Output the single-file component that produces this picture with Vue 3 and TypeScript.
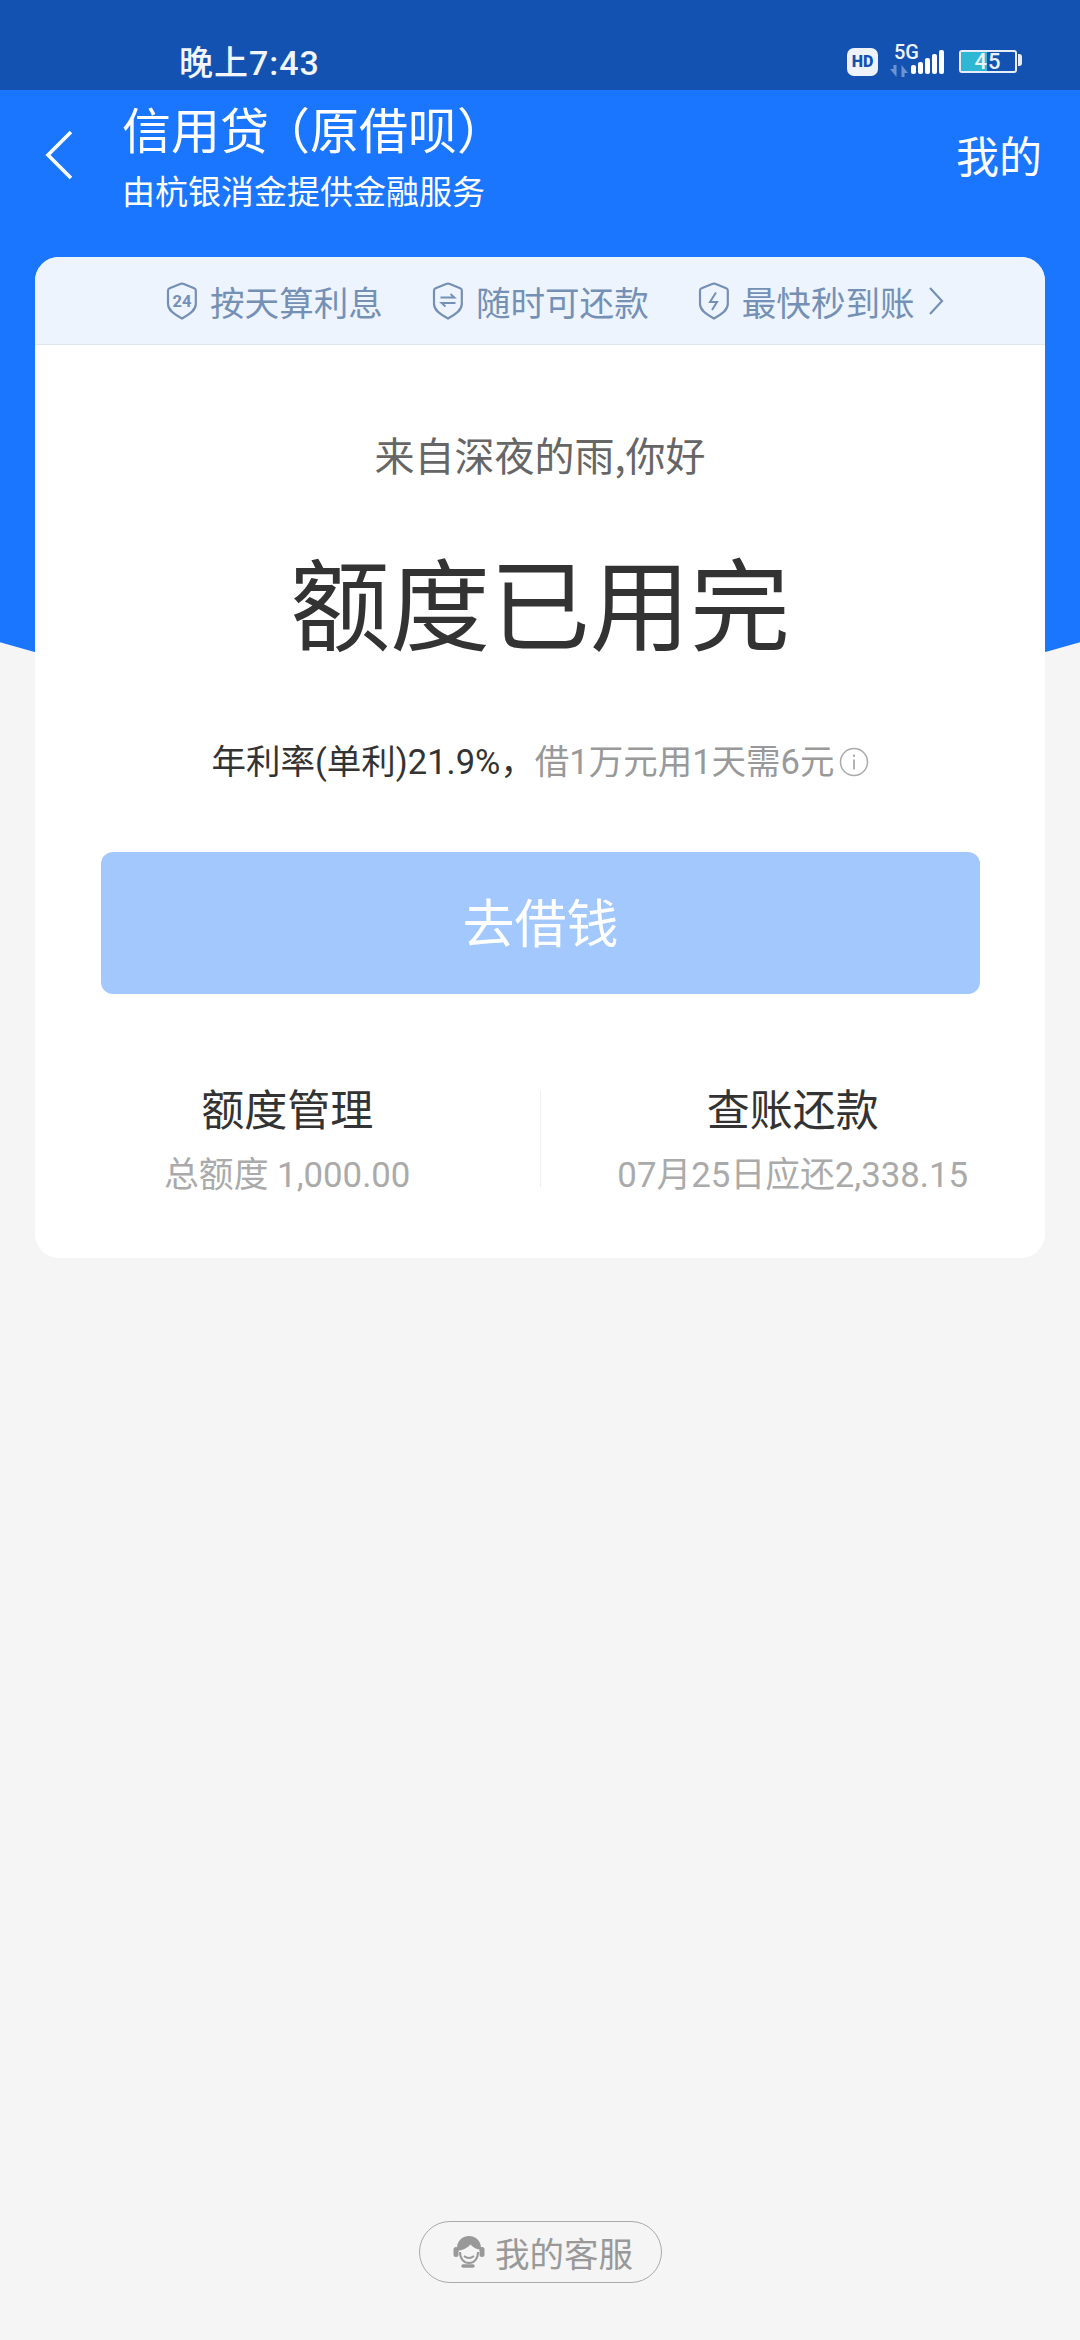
<script setup lang="ts">
const perks = [
  { key: 'day', label: '按天算利息' },
  { key: 'repay', label: '随时可还款' },
  { key: 'fast', label: '最快秒到账' },
]
const signal = [9, 12, 16, 20, 24]
</script>

<template>
  <div class="page">
    <div class="heroBg"></div>

    <div class="statusBar">
      <span class="time">晚上7:43</span>
      <div class="statusIcons">
        <span class="hd">HD</span>
        <div class="net">
          <span class="fiveG">5G</span>
          <svg class="arrows" width="18" height="12" viewBox="0 0 18 12">
            <path d="M0 4h3.500V0h3v12zM18 8h-3.500v4h-3V0z" fill="#6f93cf" />
          </svg>
        </div>
        <div class="bars">
          <i v-for="h in signal" :key="h" :style="{ height: h + 'px' }"></i>
        </div>
        <div class="battery">
          <div class="batteryFill"></div>
          <span class="batteryText">45</span>
        </div>
        <i class="batteryNub"></i>
      </div>
    </div>

    <header class="header">
      <svg class="back" width="30" height="50" viewBox="0 0 30 50">
        <path d="M27 2 4 25l23 23" fill="none" stroke="#fff" stroke-width="3.600" />
      </svg>
      <div class="titles">
        <div class="title">信用贷<span class="paren">（</span>原借呗）</div>
        <div class="subtitle">由杭银消金提供金融服务</div>
      </div>
      <div class="mine">我的</div>
    </header>

    <main class="card">
      <div class="perks">
        <div v-for="p in perks" :key="p.key" class="perk">
          <svg class="shield" width="32" height="38" viewBox="0 0 32 38">
            <path d="M14.800 1.800a3 3 0 0 1 2.400 0l11 4.400a2.500 2.500 0 0 1 1.600 2.300V22c0 6-5.500 10-13.800 14.500C7.500 32 2 28 2 22V8.500a2.500 2.500 0 0 1 1.600-2.300z" fill="none" stroke="#7590b5" stroke-width="2.200" />
            <text v-if="p.key === 'day'" x="16" y="24.500" text-anchor="middle" class="shield24">24</text>
            <path v-else-if="p.key === 'repay'" d="M8.500 15.500h14l-4-3.500M23.500 21h-14l4 3.500" fill="none" stroke="#7590b5" stroke-width="1.800" />
            <path v-else d="M18 10.500 12 20h7l-5 8" fill="none" stroke="#7590b5" stroke-width="2" />
          </svg>
          <span>{{ p.label }}</span>
        </div>
        <svg class="chevron" width="16" height="28" viewBox="0 0 16 28">
          <path d="m2 1 12 13L2 27" fill="none" stroke="#7590b5" stroke-width="2.200" />
        </svg>
      </div>

      <div class="body">
        <div class="greeting">来自深夜的雨,你好</div>
        <div class="quota">额度已用完</div>
        <div class="rate">
          <span class="rateDark">年利率(单利)21.9%，</span><span>借1万元用1天需6元</span>
          <svg class="info" width="30" height="30" viewBox="0 0 30 30">
            <circle cx="15" cy="15" r="13.500" fill="none" stroke="#aaa" stroke-width="1.500" />
            <path d="M15 7.500v2.500M15 12.500v10" stroke="#aaa" stroke-width="1.800" />
          </svg>
        </div>
        <button class="borrow">去借钱</button>
        <div class="stats">
          <div class="stat">
            <div class="statTitle">额度管理</div>
            <div class="statSub">总额度 1,000.00</div>
          </div>
          <div class="divider"></div>
          <div class="stat">
            <div class="statTitle">查账还款</div>
            <div class="statSub">07月25日应还2,338.15</div>
          </div>
        </div>
      </div>
    </main>

    <footer class="footer">
      <div class="service">
        <svg width="32" height="34" viewBox="0 0 32 34">
          <rect x="0.500" y="12" width="5" height="10" rx="2.500" fill="#999" />
          <rect x="26.500" y="12" width="5" height="10" rx="2.500" fill="#999" />
          <path d="M4 13C4 6 9 1 16 1s12 5 12 12v2c-4-.5-8-2.500-10.500-5.500C15 12.500 10 15 6.500 15.500L4 16z" fill="#999" />
          <path d="M7 17c0 7 4 11 9 11s9-4 9-11M11 21c3 2.500 7 2.500 10 0" fill="none" stroke="#999" stroke-width="2" />
          <path d="M10 31h10" stroke="#999" stroke-width="3.500" stroke-linecap="round" />
        </svg>
        <span>我的客服</span>
      </div>
    </footer>
  </div>
</template>

<style scoped>
.page { position: relative; width: 1080px; min-height: 2340px; display: flex; flex-direction: column; background: #f5f5f5; font-family: "Noto Sans CJK SC", Roboto, sans-serif; overflow: hidden; }
.page > * { position: relative; }
.page > .heroBg { position: absolute; left: 0; top: 90px; width: 1080px; height: 600px; background: #1a76fe; clip-path: ellipse(1000px 460px at 50% 165px); }

.statusBar { height: 90px; background: #1352b1; display: flex; align-items: flex-start; justify-content: space-between; color: #f2f5fb; }
.time { margin: 44px 0 0 179px; font: 500 34px/38px Roboto, "Noto Sans CJK SC", sans-serif; letter-spacing: 1px; }
.statusIcons { display: flex; align-items: flex-start; margin: 48px 58px 0 0; }
.hd { width: 31px; height: 28px; border-radius: 7px; background: #eef3fb; color: #1352b1; font: 900 16px/28px Roboto, sans-serif; text-align: center; }
.net { width: 26px; margin: -4px 0 0 16px; display: flex; flex-direction: column; align-items: flex-start; }
.fiveG { font: 500 20px/16px Roboto, sans-serif; }
.arrows { margin: 5px 0 0 -4px; }
.bars { display: flex; align-items: flex-end; gap: 2px; height: 24px; margin-left: -9px; margin-top: 2px; }
.bars i { width: 5px; background: #fff; border-radius: 2px; }
.battery { position: relative; width: 58px; height: 23px; margin-left: 15px; margin-top: 2px; border: 2px solid #e8eef8; border-radius: 3px; box-sizing: border-box; }
.batteryFill { width: 26px; height: 100%; background: #2fb6d3; }
.batteryText { position: absolute; inset: 0; text-align: center; font: 500 22px/19px Roboto, sans-serif; letter-spacing: 1px; color: #e8f2fc; }
.batteryNub { width: 4px; height: 12px; margin: 6px 0 0 1px; background: #e8eef8; border-radius: 0 3px 3px 0; }

.header { height: 167px; display: flex; align-items: flex-start; color: #fff; }
.back { margin: 40px 0 0 44px; }
.titles { margin: 6px 0 0 48px; }
.title { font-size: 49px; line-height: 64px; white-space: nowrap; }
.paren { margin-left: -8px; }
.subtitle { margin-top: 8px; font-size: 33px; line-height: 44px; white-space: nowrap; }
.mine { margin: 35px 38px 0 auto; font-size: 43px; line-height: 58px; }

.card { margin: 0 35px; background: #fff; border-radius: 24px; overflow: hidden; }
.perks { height: 88px; box-sizing: border-box; border-bottom: 1px solid #dfe5ee; background: #edf4fe; display: flex; align-items: center; padding-left: 131px; color: #7590b5; font-size: 34.600px; }
.perk { display: flex; align-items: center; gap: 12px; margin-right: 49px; }
.perk:nth-child(3) { margin-right: 0; }
.shield24 { font: 700 16.500px Roboto, sans-serif; fill: #7590b5; }
.chevron { margin-left: 13px; }

.body { padding: 84px 66px 61px; text-align: center; }
.greeting { font-size: 40px; line-height: 50px; color: #666; }
.quota { margin-top: 51px; font-size: 100px; line-height: 140px; color: #333; }
.rate { margin-top: 70px; height: 44px; display: flex; align-items: center; justify-content: center; font: 34.500px/44px Roboto, "Noto Sans CJK SC", sans-serif; color: #999; white-space: nowrap; }
.rateDark { color: #333; }
.info { margin-left: 4px; }
.borrow { display: block; width: 879px; height: 142px; margin: 68px 0 0; padding: 0 0 6px; border: 0; border-radius: 12px; background: #a2c8fe; color: #fff; font: 52px "Noto Sans CJK SC", sans-serif; }
.stats { display: grid; grid-template-columns: 1fr 1px 1fr; margin: 88px -66px 0; }
.stat { display: grid; gap: 21px; }
.statTitle { font-size: 43px; line-height: 50px; color: #333; }
.statSub { font: 34.800px/44px Roboto, "Noto Sans CJK SC", sans-serif; color: #aaa; white-space: nowrap; }
.divider { margin-top: 9px; height: 96px; background: #eee; }

.footer { margin-top: auto; padding-bottom: 57px; display: flex; justify-content: center; }
.service { width: 243px; height: 62px; box-sizing: border-box; padding-left: 6px; border: 1.500px solid #aaa; border-radius: 31px; display: flex; align-items: center; justify-content: center; gap: 10px; font-size: 34.500px; color: #999; }
</style>
